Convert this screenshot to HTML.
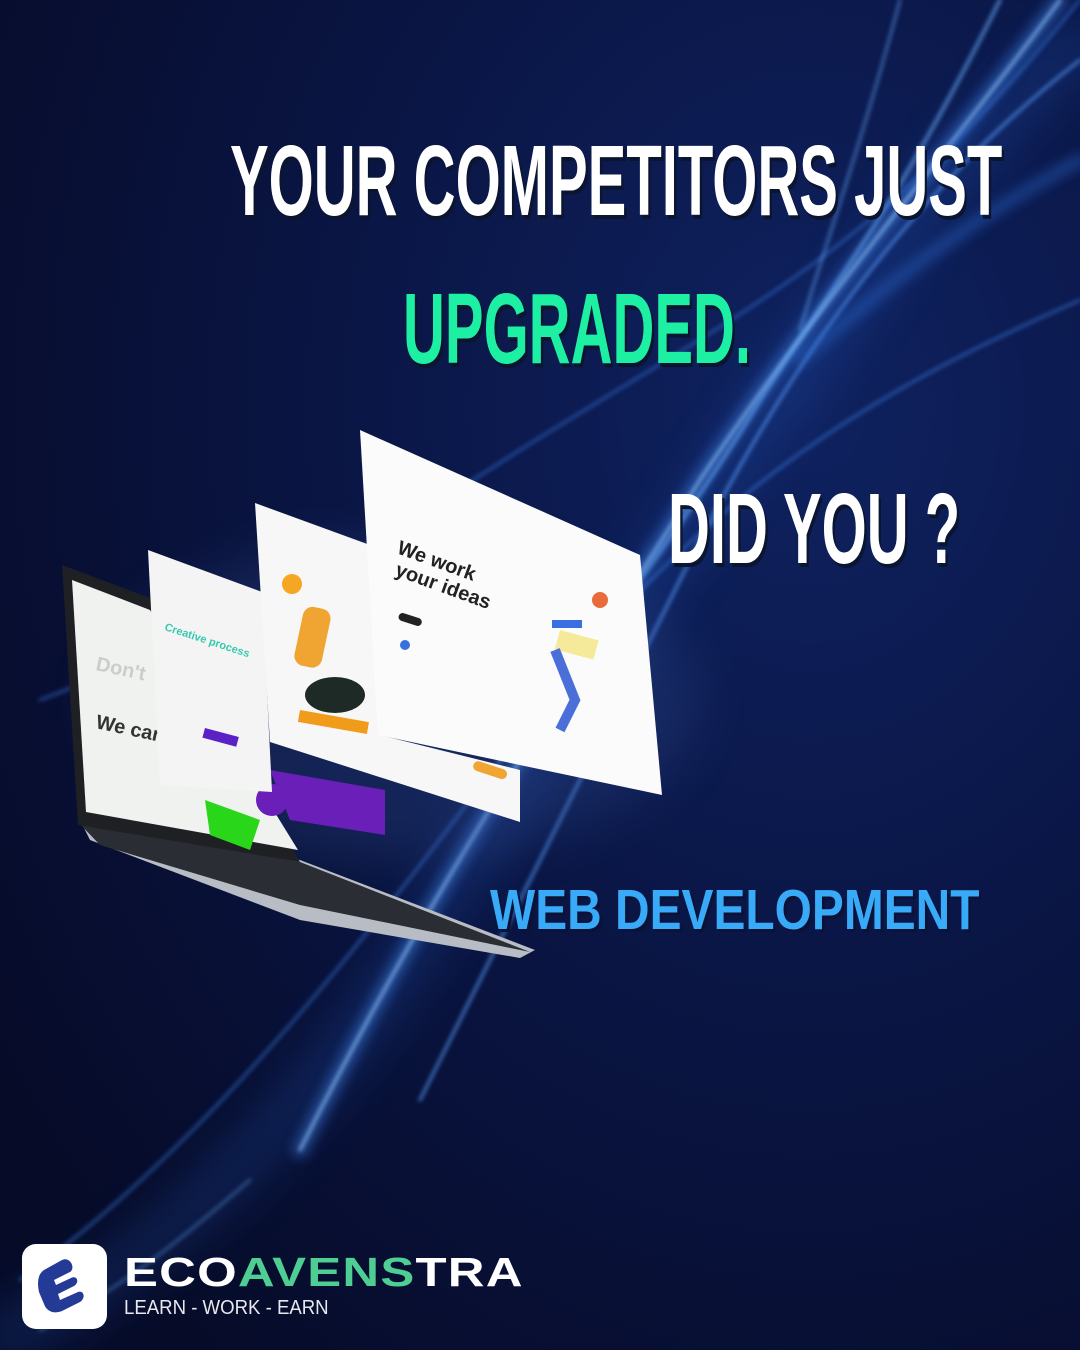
<!DOCTYPE html>
<html><head><meta charset="utf-8"><style>
html,body{margin:0;padding:0}
body{width:1080px;height:1350px;overflow:hidden;position:relative;background:#0a1238;font-family:"Liberation Sans",sans-serif}
.t{position:absolute;font-weight:bold;white-space:nowrap;transform-origin:0 0;line-height:1;text-shadow:4px 4px 0 #0b1530}
</style></head><body>
<svg width="1080" height="1350" style="position:absolute;left:0;top:0">
<defs>
<radialGradient id="bg" cx="0.75" cy="0.3" r="0.9">
<stop offset="0" stop-color="#0f2260"/><stop offset="0.45" stop-color="#0a1646"/><stop offset="1" stop-color="#060b28"/>
</radialGradient>
<filter id="b1"><feGaussianBlur stdDeviation="6"/></filter>
<filter id="b2"><feGaussianBlur stdDeviation="2"/></filter>
<filter id="b3"><feGaussianBlur stdDeviation="25"/></filter>
</defs>
<rect width="1080" height="1350" fill="url(#bg)"/>
<g fill="none" stroke-linecap="round">
<path d="M1080 40 C900 200 700 500 380 1000 C250 1180 120 1280 0 1340" stroke="#2a6de0" stroke-width="40" opacity=".25" filter="url(#b3)"/>
<path d="M1060 0 C950 150 820 300 700 480 C600 640 450 850 300 1150" stroke="#3f86f0" stroke-width="14" opacity=".5" filter="url(#b1)"/>
<path d="M1060 0 C950 150 820 300 700 480 C600 640 450 850 300 1150" stroke="#9fd0ff" stroke-width="3" opacity=".7" filter="url(#b2)"/>
<path d="M1080 60 C900 200 780 380 690 560 C620 700 520 900 420 1100" stroke="#5aa0ff" stroke-width="3" opacity=".7" filter="url(#b2)"/>
<path d="M1000 0 C900 200 850 260 760 400 C700 500 600 640 500 760" stroke="#6ab0ff" stroke-width="4" opacity=".6" filter="url(#b2)"/>
<path d="M1080 0 C880 250 760 300 520 450 C380 540 250 620 40 700" stroke="#3a7ee8" stroke-width="3" opacity=".5" filter="url(#b2)"/>
<path d="M1080 300 C900 380 700 480 500 760 C350 960 200 1150 20 1280" stroke="#3f86f0" stroke-width="3" opacity=".5" filter="url(#b2)"/>
<path d="M900 0 C860 150 820 260 800 330" stroke="#6ab0ff" stroke-width="3" opacity=".5" filter="url(#b2)"/>
<path d="M1080 160 C950 230 870 300 800 360" stroke="#2f75e0" stroke-width="12" opacity=".4" filter="url(#b1)"/>
<path d="M250 1180 C180 1240 120 1290 40 1330" stroke="#6ab0ff" stroke-width="3" opacity=".4" filter="url(#b2)"/>
</g>
<ellipse cx="400" cy="700" rx="300" ry="160" fill="#3d5fa8" opacity=".22" filter="url(#b3)"/>
<polygon points="80,820 300,860 535,950 520,958 300,920 90,840" fill="#b8bcc4"/>
<polygon points="78,822 300,862 530,952 300,905 100,845" fill="#2a2d33"/>
<polygon points="62,565 150,598 300,862 78,825" fill="#1e2024"/>
<polygon points="72,580 150,610 298,850 86,812" fill="#f0f2f0"/>
<text x="95" y="728" font-size="20" font-weight="bold" fill="#333" transform="rotate(12 95 728)">We can</text>
<text x="95" y="670" font-size="20" font-weight="bold" fill="#ccc" transform="rotate(12 95 670)">Don't</text>
<polygon points="270,770 385,790 385,835 290,820" fill="#6a1fb8"/>
<circle cx="272" cy="800" r="16" fill="#6a1fb8"/>
<polygon points="205,800 260,820 250,850 210,835" fill="#2ad61a"/>
<polygon points="148,550 262,592 272,792 160,785" fill="#f4f4f4"/>
<text x="164" y="630" font-size="11" font-weight="bold" fill="#36c9b0" transform="rotate(18 164 630)">Creative process</text>
<rect x="205" y="728" width="35" height="10" fill="#5a22c4" transform="rotate(15 205 728)"/>
<polygon points="255,503 370,545 380,735 520,770 520,822 270,742" fill="#f7f7f7"/>
<circle cx="292" cy="584" r="10" fill="#f5a623"/>
<rect x="305" y="605" width="28" height="60" rx="10" fill="#f0a533" transform="rotate(12 305 605)"/>
<ellipse cx="335" cy="695" rx="30" ry="18" fill="#1d2a25"/>
<rect x="300" y="710" width="70" height="12" fill="#f09b1a" transform="rotate(10 300 710)"/>
<rect x="475" y="760" width="35" height="10" rx="5" fill="#f0a533" transform="rotate(18 475 760)"/>
<polygon points="360,430 640,555 662,795 378,735" fill="#fbfbfb"/>
<text x="396" y="553" font-size="20" font-weight="bold" fill="#222" transform="rotate(20 396 553)">We work</text>
<text x="394" y="575" font-size="20" font-weight="bold" fill="#222" transform="rotate(20 394 575)">your ideas</text>
<rect x="400" y="612" width="24" height="8" rx="4" fill="#222" transform="rotate(18 400 612)"/>
<circle cx="405" cy="645" r="5" fill="#3a6fe0"/>
<rect x="560" y="630" width="40" height="20" fill="#f4ea9a" transform="rotate(15 560 630)"/>
<path d="M555 650 L575 700 L560 730" stroke="#4a6fd8" stroke-width="10" fill="none"/>
<circle cx="600" cy="600" r="8" fill="#e96a3a"/>
<rect x="552" y="620" width="30" height="8" fill="#3a6fe0"/>
</svg>

<div class="t" style="left:230px;top:131px;font-size:100px;color:#fff;transform:scaleX(.58)">YOUR COMPETITORS JUST</div>
<div class="t" style="left:403px;top:279px;font-size:100px;color:#1df0a2;transform:scaleX(.58)">UPGRADED.</div>
<div class="t" style="left:668px;top:479px;font-size:100px;color:#fff;transform:scaleX(.58)">DID YOU ?</div>
<div class="t" style="left:490px;top:882px;font-size:57px;color:#38aaf8;text-shadow:3px 3px 0 #0a1236;transform:scaleX(.84)">WEB DEVELOPMENT</div>

<div style="position:absolute;left:22px;top:1244px;width:85px;height:85px;background:#fff;border-radius:14px"></div>
<svg width="85" height="85" style="position:absolute;left:22px;top:1244px" viewBox="0 0 85 85">
<path d="M40 16 L22 26 C16 30 15 38 17 48 L22 60 C25 68 32 70 40 67 L58 58 C64 54 62 46 56 48 L38 56 L36 50 L52 42 C58 38 55 31 49 34 L34 41 L32 36 L48 28 C54 24 48 12 40 16 Z" fill="#233a96"/>
</svg>
<div style="position:absolute;left:124px;top:1252px;font-size:41px;font-weight:bold;letter-spacing:1px;color:#fff;transform:scaleX(1.24);transform-origin:0 0;line-height:1">ECO<span style="color:#4fce94">AVENS</span>TRA</div>
<div style="position:absolute;left:124px;top:1298px;font-size:20px;color:#e8e8ef;line-height:1;transform:scaleX(.93);transform-origin:0 0">LEARN - WORK - EARN</div>
</body></html>
